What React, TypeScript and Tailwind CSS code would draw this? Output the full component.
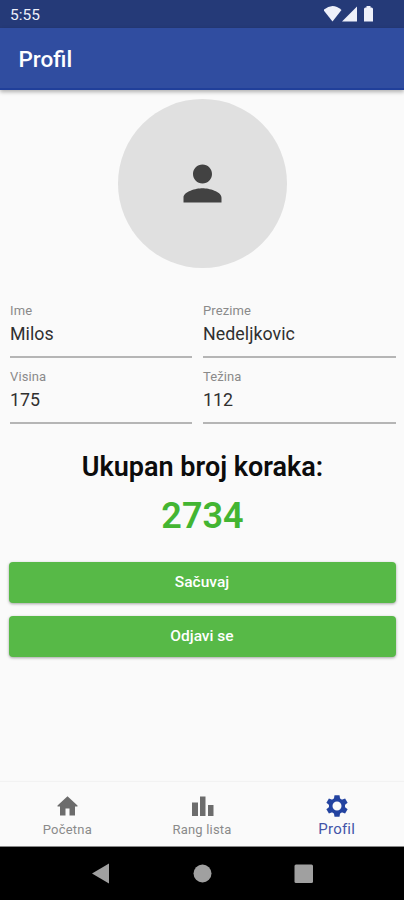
import React from 'react';

function Field({ label, value }: { label: string; value: string }) {
  return (
    <div className="flex h-[58px] flex-col border-b-2 border-[#b5b5b5] pt-[3px]">
      <span className="text-[13px] leading-[16px] tracking-[0.1px] text-[#8a8a8a]">{label}</span>
      <span className="mt-[2px] text-[17.8px] leading-[25px] tracking-[0.05px] text-[#303030]">{value}</span>
    </div>
  );
}

function Button({ label }: { label: string }) {
  return (
    <button className="flex h-[41px] w-full items-center justify-center rounded-[4px] bg-[#57b947] pr-px pt-px text-[15.5px] font-medium text-white shadow-[0_1px_3px_rgba(0,0,0,0.35)]">
      {label}
    </button>
  );
}

function NavItem({ label, active = false, children }: { label: string; active?: boolean; children: React.ReactNode }) {
  return (
    <div className={`flex flex-1 flex-col items-center ${active ? 'text-[#2343a0]' : 'text-[#6c6c6c]'}`}>
      <svg className="mt-[11px] size-[27px]" viewBox="0 0 27 27" fill="currentColor">{children}</svg>
      <span className={active ? 'text-[15px] leading-[18px] tracking-[0.2px] text-[#4254a8]' : 'mt-[2px] text-[13px] leading-[16px] tracking-[0.2px] text-[#8a8a8a]'}>{label}</span>
    </div>
  );
}

const gearTeeth = [0, 60, 120, 180, 240, 300];

export default function App() {
  return (
    <div className="flex h-[900px] w-[404px] flex-col overflow-hidden bg-[#fafafa] font-['Roboto',sans-serif]">
      <div className="flex h-[28px] shrink-0 items-center bg-[#253a78] px-[10px] text-[#eef0fa]">
        <span className="flex-1 pt-[3px] text-[15.5px]">5:55</span>
        <svg className="mr-[10px] h-[28px] w-[60px]" viewBox="0 0 60 28" fill="currentColor">
          <path d="M-.5 10Q8.500 2 17.500 10L8.500 21.500Z" /><path d="M18 21.500L33 6.500V21.500Z" /><path d="M40 9q0-1.500 1.500-1.500h1V6h4v1.500h1q1.500 0 1.500 1.500V21.500h-9Z" />
        </svg>
      </div>
      <header className="flex h-[62px] shrink-0 items-center border-b-2 border-[#203f9a] bg-[#304da0] px-[18.500px] pt-[4px] text-[22.5px] font-medium text-white shadow-[0_2px_4px_rgba(0,0,0,0.3)]">Profil</header>
      <main className="flex flex-1 flex-col pr-[8px] pl-[9px] pt-[9px]">
        <div className="flex size-[169px] items-center justify-center self-center rounded-full bg-[#e0e0e0]">
          <svg className="size-[57px] text-[#424242]" viewBox="0 0 24 24" fill="currentColor"><path d="M12 12c2.210 0 4-1.790 4-4s-1.790-4-4-4-4 1.790-4 4 1.790 4 4 4zm0 2c-2.670 0-8 1.340-8 4v2h16v-2c0-2.660-5.330-4-8-4z" /></svg>
        </div>
        <div className="ml-px mt-[32px] grid grid-cols-[182px_193px] gap-x-[11px] gap-y-[8px]">
          <Field label="Ime" value="Milos" />
          <Field label="Prezime" value="Nedeljkovic" />
          <Field label="Visina" value="175" />
          <Field label="Težina" value="112" />
        </div>
        <h1 className="mt-[27px] text-center text-[27px] leading-[32px] font-semibold text-[#0c0c0c]">Ukupan broj koraka:</h1>
        <p className="mt-[11px] text-center text-[36px] leading-[44px] font-semibold text-[#43b532]">2734</p>
        <div className="mt-[24px] flex flex-col gap-[13px]"><Button label="Sačuvaj" /><Button label="Odjavi se" /></div>
      </main>
      <nav className="flex h-[65px] shrink-0 border-b border-[#888888] bg-[#fafafa] shadow-[0_-1px_1px_rgba(0,0,0,0.03)]">
        <NavItem label="Početna"><path d="M13.500 3.300 23.500 12.500V13.500H21V22.500h-5.500V15.500h-4v7H6v-9H3.500v-1z" /></NavItem>
        <NavItem label="Rang lista"><path d="M3 9.500h6V23H3zM11 3.500h5.500V23H11zM19 12h5.500V23h-5.500z" /></NavItem>
        <NavItem active label="Profil">
          <g transform="translate(14 13)">
            <circle r="6.300" fill="none" stroke="currentColor" strokeWidth="3.600" />
            {gearTeeth.map((angle) => (
              <path key={angle} d="M-3.200-6.500-2.500-10.800h5L3.200-6.500z" transform={`rotate(${angle})`} />
            ))}
          </g>
        </NavItem>
      </nav>
      <footer className="flex h-[53px] shrink-0 items-center bg-black text-[#a0a0a0]">
        <svg className="h-[53px] w-full" viewBox="0 0 404 53" fill="currentColor"><path d="M92 26.500L109 16.500V36.500Z" /><circle cx="202.500" cy="26.500" r="9" /><rect x="294.500" y="17.500" width="18.500" height="18.500" rx="1.500" /></svg>
      </footer>
    </div>
  );
}
